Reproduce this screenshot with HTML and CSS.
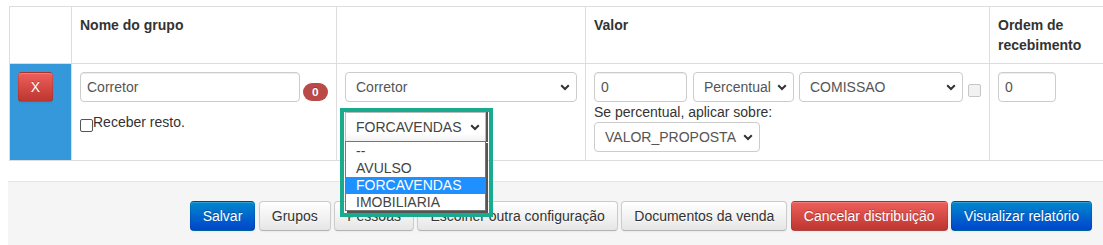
FILE: index.html
```html
<!DOCTYPE html>
<html lang="pt-BR">
<head>
<meta charset="utf-8">
<title>Distribuição</title>
<link rel="stylesheet" href="styles.css">
</head>
<body>
<div class="page">
  <table class="grid">
    <thead>
      <tr>
        <th class="c0"></th>
        <th class="c1">Nome do grupo</th>
        <th class="c2"></th>
        <th class="c3">Valor</th>
        <th class="c4">Ordem de recebimento</th>
      </tr>
    </thead>
    <tbody>
      <tr>
        <td class="c0 del"><button class="btn btn-danger btn-x" type="button">X</button></td>
        <td class="c1">
          <div class="line">
            <input class="inp inp-name" type="text" value="Corretor" readonly>
            <span class="badge">0</span>
          </div>
          <label class="chk"><span class="box"></span>Receber resto.</label>
        </td>
        <td class="c2">
          <div class="sel sel-tipo"><span>Corretor</span><svg class="chev" viewBox="0 0 10 7"><polyline points="1.2,1.2 5,5 8.8,1.2"/></svg></div>
          <div class="dd">
            <div class="sel sel-sub"><span>FORCAVENDAS</span><svg class="chev" viewBox="0 0 10 7"><polyline points="1.2,1.2 5,5 8.8,1.2"/></svg></div>
            <ul class="listbox">
              <li>--</li>
              <li>AVULSO</li>
              <li class="on">FORCAVENDAS</li>
              <li>IMOBILIARIA</li>
            </ul>
            <div class="frame"></div>
          </div>
        </td>
        <td class="c3">
          <div class="line">
            <input class="inp inp-valor" type="text" value="0" readonly>
            <div class="sel sel-tipo-valor"><span>Percentual</span><svg class="chev" viewBox="0 0 10 7"><polyline points="1.2,1.2 5,5 8.8,1.2"/></svg></div>
            <div class="sel sel-base"><span>COMISSAO</span><svg class="chev" viewBox="0 0 10 7"><polyline points="1.2,1.2 5,5 8.8,1.2"/></svg></div>
            <span class="box box-disabled"></span>
          </div>
          <div class="hint">Se percentual, aplicar sobre:</div>
          <div class="sel sel-sobre"><span>VALOR_PROPOSTA</span><svg class="chev" viewBox="0 0 10 7"><polyline points="1.2,1.2 5,5 8.8,1.2"/></svg></div>
        </td>
        <td class="c4">
          <input class="inp inp-ordem" type="text" value="0" readonly>
        </td>
      </tr>
    </tbody>
  </table>

  <div class="actions">
    <button class="btn btn-primary" type="button">Salvar</button>
    <button class="btn" type="button">Grupos</button>
    <button class="btn" type="button">Pessoas</button>
    <button class="btn" type="button">Escolher outra configuração</button>
    <button class="btn" type="button">Documentos da venda</button>
    <button class="btn btn-danger" type="button">Cancelar distribuição</button>
    <button class="btn btn-primary" type="button">Visualizar relatório</button>
  </div>
</div>
</body>
</html>
```

FILE: styles.css
```css
html, body {
  margin: 0;
  padding: 0;
  overflow: hidden;
  background: #fff;
}

body {
  font-family: "Liberation Sans", Arial, sans-serif;
  font-size: 14px;
  line-height: 20px;
  color: #333;
}

.page {
  padding: 6px 0 0 8px;
}

/* ---------- table ---------- */
.grid {
  margin-left: 1px;
  width: 1110px;
  table-layout: fixed;
  border-collapse: separate;
  border-spacing: 0;
}

.grid th,
.grid td {
  box-sizing: border-box;
  padding: 8px;
  border-left: 1px solid #ddd;
  border-top: 1px solid #ddd;
  text-align: left;
  vertical-align: top;
  line-height: 20px;
}

.grid tbody td {
  border-bottom: 1px solid #ddd;
}

.grid th {
  font-weight: bold;
  color: #333;
}

.c0 { width: 62px; }
.c1 { width: 265px; }
.c2 { width: 249px; }
.c3 { width: 404px; }
.c4 { width: 130px; }

.grid td.del {
  background: #3498db;
}

.line {
  display: flex;
  align-items: flex-start;
}

/* ---------- form controls ---------- */
.inp {
  box-sizing: border-box;
  height: 30px;
  margin: 0;
  padding: 4px 6px;
  border: 1px solid #ccc;
  border-radius: 4px;
  background: #fff;
  box-shadow: inset 0 1px 1px rgba(0, 0, 0, 0.075);
  font-family: inherit;
  font-size: 14px;
  line-height: 20px;
  color: #555;
  outline: none;
}

.inp-name { width: 220px; }
.inp-valor { width: 93px; }
.inp-ordem { width: 58px; }

.sel {
  box-sizing: border-box;
  height: 30px;
  display: flex;
  align-items: center;
  justify-content: space-between;
  padding: 0 6px 0 10px;
  border: 1px solid #ccc;
  border-radius: 4px;
  background: #fff;
  color: #555;
  white-space: nowrap;
}

.chev {
  width: 10px;
  height: 7px;
  flex: none;
  fill: none;
  stroke: #333;
  stroke-width: 2;
}

.sel-tipo { width: 232px; }
.sel-tipo-valor { width: 101px; margin-left: 6px; }
.sel-base { width: 164px; margin-left: 5px; }
.sel-sobre { width: 166px; }

.badge {
  margin: 11px 0 0 3px;
  padding: 2px 9px;
  border-radius: 9px;
  background: #b94a48;
  color: #fff;
  font-size: 11.8px;
  font-weight: bold;
  line-height: 14px;
  text-shadow: 0 -1px 0 rgba(0, 0, 0, 0.25);
}

.chk {
  display: flex;
  align-items: flex-start;
  margin-top: 10px;
  color: #333;
}

.box {
  box-sizing: border-box;
  width: 13px;
  height: 13px;
  flex: none;
  margin-top: 7px;
  border: 1px solid #555;
  border-radius: 2px;
  background: #fff;
}

.box-disabled {
  margin: 12px 0 0 5px;
  border-color: #c6c6c6;
  background: #f2f2f2;
}

.hint {
  color: #333;
}

/* ---------- open dropdown ---------- */
.dd {
  position: relative;
  width: 141px;
  margin-top: 10px;
}

.sel-sub {
  width: 141px;
  border-radius: 0;
  border-color: #bbb;
  color: #444;
  padding-right: 5px;
  box-shadow: 2px 0 0 #555;
  background: linear-gradient(#fff 70%, #f3f3f3);
}

.listbox {
  position: absolute;
  z-index: 5;
  left: 0;
  top: 29px;
  box-sizing: border-box;
  width: 141px;
  height: 70px;
  margin: 0;
  padding: 1px 0 0;
  list-style: none;
  border: 1px solid #767676;
  background: #fff;
  box-shadow: 2px 2px 0 #555;
  color: #444;
  line-height: 17px;
}

.listbox li {
  padding-left: 10px;
  white-space: nowrap;
}

.listbox li.on {
  background: #1e90ff;
  color: #fff;
}

.frame {
  position: absolute;
  z-index: 6;
  left: -5px;
  top: -4px;
  width: 153px;
  height: 109px;
  box-sizing: border-box;
  border: 4px solid #19ab8d;
  pointer-events: none;
}

/* ---------- buttons ---------- */
.btn {
  box-sizing: border-box;
  height: 30px;
  margin: 0;
  padding: 4px 12px;
  border: 1px solid #ccc;
  border-bottom-color: #b3b3b3;
  border-radius: 4px;
  background: linear-gradient(#fff, #e6e6e6);
  box-shadow: inset 0 1px 0 rgba(255, 255, 255, 0.2), 0 1px 2px rgba(0, 0, 0, 0.05);
  font-family: inherit;
  font-size: 14px;
  line-height: 20px;
  color: #333;
  text-shadow: 0 1px 1px rgba(255, 255, 255, 0.75);
  white-space: nowrap;
  cursor: pointer;
}

.btn-primary {
  border-color: rgba(0, 0, 0, 0.1) rgba(0, 0, 0, 0.1) rgba(0, 0, 0, 0.25);
  background: linear-gradient(#0088cc, #0044cc);
  color: #fff;
  text-shadow: 0 -1px 0 rgba(0, 0, 0, 0.25);
}

.btn-danger {
  border-color: rgba(0, 0, 0, 0.1) rgba(0, 0, 0, 0.1) rgba(0, 0, 0, 0.25);
  background: linear-gradient(#ee5f5b, #bd362f);
  color: #fff;
  text-shadow: 0 -1px 0 rgba(0, 0, 0, 0.25);
}

.btn-x {
  width: 35px;
  padding: 4px 0;
}

.actions {
  display: flex;
  justify-content: flex-end;
  gap: 3.5px;
  margin-top: 20px;
  padding: 19px 11px 20px 0;
  border-top: 1px solid #e5e5e5;
  background: #f5f5f5;
}
```
